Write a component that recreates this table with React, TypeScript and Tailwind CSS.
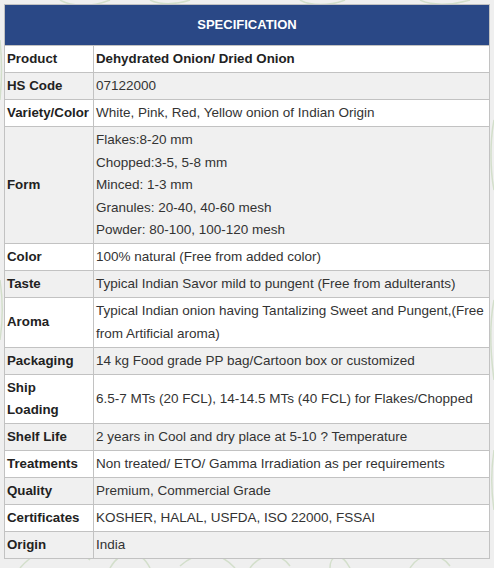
import React from "react";

const rows: { label: React.ReactNode; value: React.ReactNode; bold?: boolean }[] = [
  { label: "Product", value: "Dehydrated Onion/ Dried Onion", bold: true },
  { label: "HS Code", value: "07122000" },
  { label: "Variety/Color", value: "White, Pink, Red, Yellow onion of Indian Origin" },
  {
    label: "Form",
    value: (
      <>
        <div>Flakes:8-20 mm</div>
        <div>Chopped:3-5, 5-8 mm</div>
        <div>Minced: 1-3 mm</div>
        <div>Granules: 20-40, 40-60 mesh</div>
        <div>Powder: 80-100, 100-120 mesh</div>
      </>
    ),
  },
  { label: "Color", value: "100% natural (Free from added color)" },
  { label: "Taste", value: "Typical Indian Savor mild to pungent (Free from adulterants)" },
  {
    label: "Aroma",
    value: (
      <>
        <span className="whitespace-nowrap">Typical Indian onion having Tantalizing Sweet and Pungent,(Free</span>
        <br />
        from Artificial aroma)
      </>
    ),
  },
  { label: "Packaging", value: "14 kg Food grade PP bag/Cartoon box or customized" },
  {
    label: (
      <>
        Ship
        <br />
        Loading
      </>
    ),
    value: "6.5-7 MTs (20 FCL), 14-14.5 MTs (40 FCL) for Flakes/Chopped",
  },
  { label: "Shelf Life", value: "2 years in Cool and dry place at 5-10 ? Temperature" },
  { label: "Treatments", value: "Non treated/ ETO/ Gamma Irradiation as per requirements" },
  { label: "Quality", value: "Premium, Commercial Grade" },
  { label: "Certificates", value: "KOSHER, HALAL, USFDA, ISO 22000, FSSAI" },
  { label: "Origin", value: "India" },
];

function Leaves() {
  return (
    <svg
      className="absolute inset-0 h-full w-full"
      viewBox="0 0 494 568"
      fill="none"
      stroke="#d3dfcb"
      strokeWidth="1.5"
    >
      <path d="M20 568 C40 545 70 540 90 560" />
      <path d="M110 568 C120 550 140 548 150 568" />
      <path d="M180 566 C200 548 220 552 235 568" />
      <path d="M250 568 C262 552 280 552 290 566" />
      <path d="M330 568 C330 556 340 550 350 568" />
      <path d="M410 568 C420 552 440 552 450 566" />
      <path d="M60 0 C70 6 90 8 110 0" />
      <path d="M150 0 C160 5 175 5 190 0" />
      <path d="M300 0 C310 6 330 6 345 0" />
      <path d="M420 0 C430 5 450 6 470 0" />
      <path d="M0 40 C2 60 2 80 0 100" />
      <path d="M0 280 C3 300 3 320 0 340" />
      <path d="M494 120 C490 140 490 170 494 190" />
      <path d="M494 300 C490 320 490 350 494 380" />
      <path d="M494 450 C491 470 491 490 494 510" />
    </svg>
  );
}

export default function App() {
  return (
    <div
      className="relative min-h-[568px] w-[494px] bg-[#efefef] pt-[4px] pl-[4px]"
      style={{ fontFamily: '"Liberation Sans", Arial, sans-serif' }}
    >
      <Leaves />
      <table className="relative w-[486px] border-collapse border border-[#c2c2c2] text-[13.5px] leading-[22.5px] text-[#333]">
        <colgroup>
          <col className="w-[89px]" />
          <col />
        </colgroup>
        <thead>
          <tr>
            <th
              colSpan={2}
              className="h-[41px] border border-[#c2c2c2] bg-[#2a4886] p-0 text-center text-[13px] font-bold text-white"
            >
              SPECIFICATION
            </th>
          </tr>
        </thead>
        <tbody>
          {rows.map((r, i) => (
            <tr key={i} className={i % 2 === 0 ? "bg-white" : "bg-[#f0f0f0]"}>
              <td className="border border-[#c2c2c2] px-[2px] pt-[2px] pb-[1.5px] align-middle text-[13.3px] font-bold text-[#222]">
                {r.label}
              </td>
              <td
                className={
                  "border border-[#c2c2c2] px-[2px] pt-[2px] pb-[1.5px] align-middle " +
                  (r.bold ? "text-[13.3px] font-bold text-[#222]" : "")
                }
              >
                {r.value}
              </td>
            </tr>
          ))}
        </tbody>
      </table>
    </div>
  );
}
